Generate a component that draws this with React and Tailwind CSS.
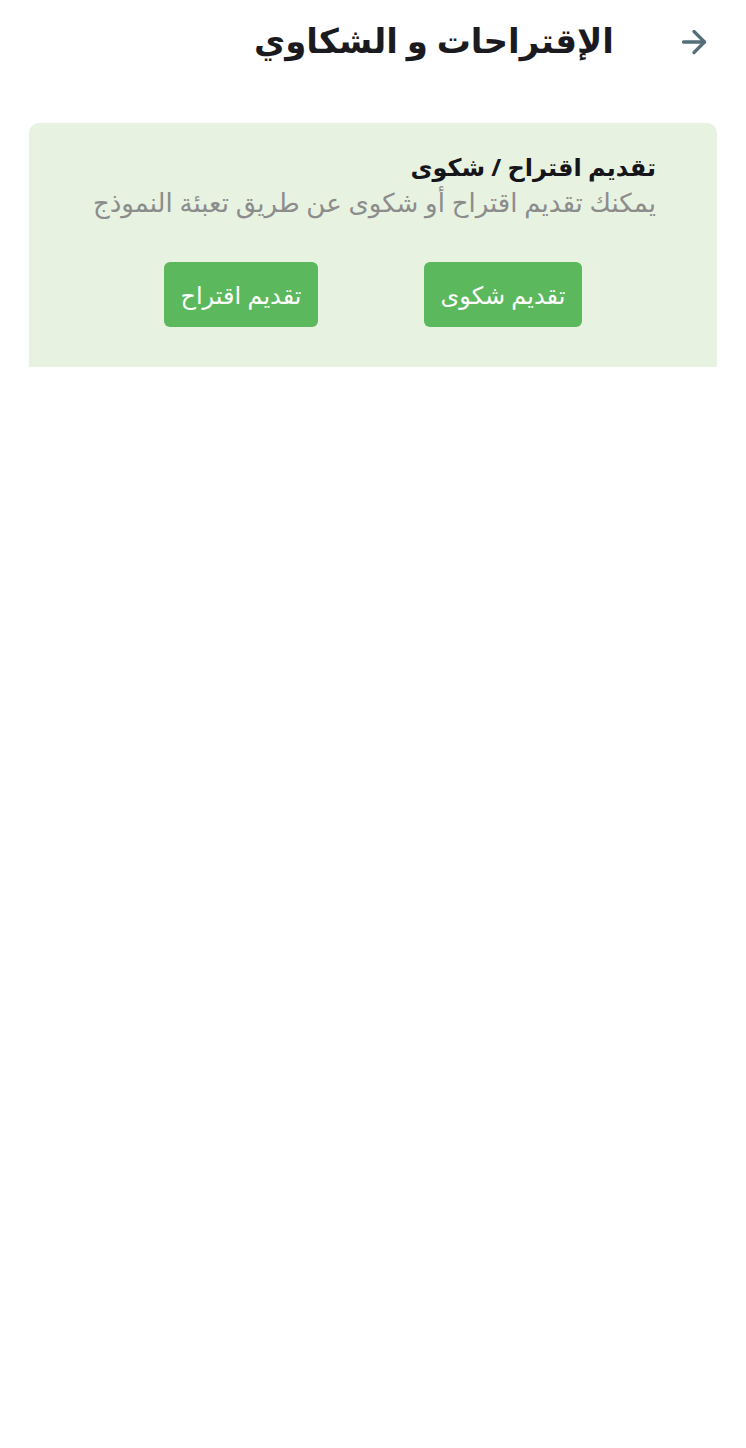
import React from "react";
import { ArrowRight } from "lucide-react";

export default function App() {
  return (
    <div
      dir="rtl"
      className="min-h-screen bg-white"
      style={{ fontFamily: '"Noto Sans", "DejaVu Sans", sans-serif' }}
    >
      {/* Header */}
      <div className="flex items-center h-[84px] pr-[34px]">
        <button className="text-[#546e7a]">
          <ArrowRight size={36} strokeWidth={2.2} />
        </button>
        <h1 className="mr-[62px] -mt-[4px] text-[34px] font-bold text-[#1b1b1f] leading-none">
          الإقتراحات و الشكاوي
        </h1>
      </div>

      {/* Card */}
      <div className="mx-[29px] mt-[39px] h-[244px] bg-[#e7f2e1] rounded-t-[10px] pt-[26px] pr-[61px] pl-[20px]">
        <h2 className="text-[24px] font-bold text-[#16161a] leading-[36px]">
          تقديم اقتراح / شكوى
        </h2>
        <p className="text-[26px] text-[#8c8c8c] leading-[34px]">
          يمكنك تقديم اقتراح أو شكوى عن طريق تعبئة النموذج
        </p>

        <div className="flex justify-center gap-[106px] mt-[43px] -mr-[41px]">
          <button className="w-[158px] h-[65px] rounded-[6px] bg-[#5cb85c] text-white text-[24px]">
            تقديم شكوى
          </button>
          <button className="w-[154px] h-[65px] rounded-[6px] bg-[#5cb85c] text-white text-[24px]">
            تقديم اقتراح
          </button>
        </div>
      </div>
    </div>
  );
}
